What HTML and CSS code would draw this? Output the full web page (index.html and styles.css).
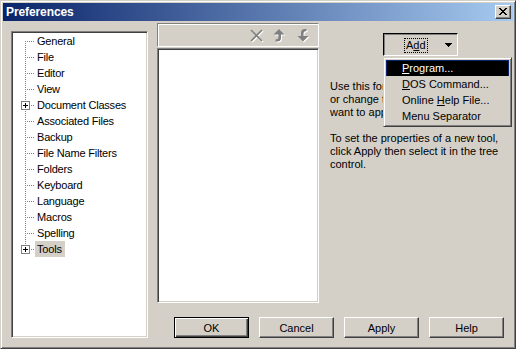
FILE: index.html
```html
<!DOCTYPE html>
<html>
<head>
<meta charset="utf-8">
<link rel="stylesheet" href="styles.css">
</head>
<body>
<div class="window">
  <div class="titlebar">
    <span class="title">Preferences</span>
    <div class="close">
      <svg width="8" height="7" viewBox="0 0 8 7" shape-rendering="crispEdges">
        <rect x="0" y="0" width="2" height="1"/><rect x="6" y="0" width="2" height="1"/>
        <rect x="1" y="1" width="2" height="1"/><rect x="5" y="1" width="2" height="1"/>
        <rect x="2" y="2" width="4" height="1"/>
        <rect x="3" y="3" width="2" height="1"/>
        <rect x="2" y="4" width="4" height="1"/>
        <rect x="1" y="5" width="2" height="1"/><rect x="5" y="5" width="2" height="1"/>
        <rect x="0" y="6" width="2" height="1"/><rect x="6" y="6" width="2" height="1"/>
      </svg>
    </div>
  </div>
  <div class="client">
    <div class="tree">
      <div class="row"><svg class="twig" width="22" height="16" shape-rendering="crispEdges"><line class="dot" x1="12.5" y1="8" x2="12.5" y2="16"/><line class="dot" x1="14" y1="8.5" x2="22" y2="8.5"/></svg><span class="label">General</span></div>
      <div class="row"><svg class="twig" width="22" height="16" shape-rendering="crispEdges"><line class="dot" x1="12.5" y1="0" x2="12.5" y2="16"/><line class="dot" x1="14" y1="8.5" x2="22" y2="8.5"/></svg><span class="label">File</span></div>
      <div class="row"><svg class="twig" width="22" height="16" shape-rendering="crispEdges"><line class="dot" x1="12.5" y1="0" x2="12.5" y2="16"/><line class="dot" x1="14" y1="8.5" x2="22" y2="8.5"/></svg><span class="label">Editor</span></div>
      <div class="row"><svg class="twig" width="22" height="16" shape-rendering="crispEdges"><line class="dot" x1="12.5" y1="0" x2="12.5" y2="16"/><line class="dot" x1="14" y1="8.5" x2="22" y2="8.5"/></svg><span class="label">View</span></div>
      <div class="row"><svg class="twig" width="22" height="16" shape-rendering="crispEdges"><line class="dot" x1="12.5" y1="0" x2="12.5" y2="4"/><line class="dot" x1="12.5" y1="14" x2="12.5" y2="16"/><line class="dot" x1="18" y1="8.5" x2="22" y2="8.5"/><rect class="box" x="8.5" y="4.5" width="8" height="8"/><rect x="10" y="8" width="5" height="1"/><rect x="12" y="6" width="1" height="5"/></svg><span class="label">Document Classes</span></div>
      <div class="row"><svg class="twig" width="22" height="16" shape-rendering="crispEdges"><line class="dot" x1="12.5" y1="0" x2="12.5" y2="16"/><line class="dot" x1="14" y1="8.5" x2="22" y2="8.5"/></svg><span class="label">Associated Files</span></div>
      <div class="row"><svg class="twig" width="22" height="16" shape-rendering="crispEdges"><line class="dot" x1="12.5" y1="0" x2="12.5" y2="16"/><line class="dot" x1="14" y1="8.5" x2="22" y2="8.5"/></svg><span class="label">Backup</span></div>
      <div class="row"><svg class="twig" width="22" height="16" shape-rendering="crispEdges"><line class="dot" x1="12.5" y1="0" x2="12.5" y2="16"/><line class="dot" x1="14" y1="8.5" x2="22" y2="8.5"/></svg><span class="label">File Name Filters</span></div>
      <div class="row"><svg class="twig" width="22" height="16" shape-rendering="crispEdges"><line class="dot" x1="12.5" y1="0" x2="12.5" y2="16"/><line class="dot" x1="14" y1="8.5" x2="22" y2="8.5"/></svg><span class="label">Folders</span></div>
      <div class="row"><svg class="twig" width="22" height="16" shape-rendering="crispEdges"><line class="dot" x1="12.5" y1="0" x2="12.5" y2="16"/><line class="dot" x1="14" y1="8.5" x2="22" y2="8.5"/></svg><span class="label">Keyboard</span></div>
      <div class="row"><svg class="twig" width="22" height="16" shape-rendering="crispEdges"><line class="dot" x1="12.5" y1="0" x2="12.5" y2="16"/><line class="dot" x1="14" y1="8.5" x2="22" y2="8.5"/></svg><span class="label">Language</span></div>
      <div class="row"><svg class="twig" width="22" height="16" shape-rendering="crispEdges"><line class="dot" x1="12.5" y1="0" x2="12.5" y2="16"/><line class="dot" x1="14" y1="8.5" x2="22" y2="8.5"/></svg><span class="label">Macros</span></div>
      <div class="row"><svg class="twig" width="22" height="16" shape-rendering="crispEdges"><line class="dot" x1="12.5" y1="0" x2="12.5" y2="16"/><line class="dot" x1="14" y1="8.5" x2="22" y2="8.5"/></svg><span class="label">Spelling</span></div>
      <div class="row"><svg class="twig" width="22" height="16" shape-rendering="crispEdges"><line class="dot" x1="12.5" y1="0" x2="12.5" y2="4"/><line class="dot" x1="18" y1="8.5" x2="22" y2="8.5"/><rect class="box" x="8.5" y="4.5" width="8" height="8"/><rect x="10" y="8" width="5" height="1"/><rect x="12" y="6" width="1" height="5"/></svg><span class="label selected">Tools</span></div>
    </div>
    <div class="main">
      <div class="top">
        <div class="listcol">
          <div class="toolbar">
            <svg class="tool" width="16" height="16" viewBox="0 0 16 16">
              <g stroke="#fff" stroke-width="1.6" transform="translate(1 1)"><line x1="3" y1="3" x2="14" y2="14"/><line x1="14" y1="3" x2="3" y2="14"/></g>
              <g stroke="#808080" stroke-width="1.6"><line x1="3" y1="3" x2="14" y2="14"/><line x1="14" y1="3" x2="3" y2="14"/></g>
            </svg>
            <svg class="tool" width="16" height="16" viewBox="0 0 16 16">
              <path fill="#fff" transform="translate(1 1)" d="M7 2 L12.5 7.5 L9 7.5 L9 11 Q9 14.5 5 14.5 L3.5 14.5 L3.5 12.5 Q6.5 12.5 6.5 10 L6.5 7.5 L1.5 7.5 Z"/>
              <path fill="#808080" d="M7 2 L12.5 7.5 L9 7.5 L9 11 Q9 14.5 5 14.5 L3.5 14.5 L3.5 12.5 Q6.5 12.5 6.5 10 L6.5 7.5 L1.5 7.5 Z"/>
            </svg>
            <svg class="tool" width="16" height="16" viewBox="0 0 16 16">
              <path fill="#fff" transform="translate(1 1)" d="M7 14.5 L1.5 9 L5 9 L5 6 Q5 2 9 2 L10.5 2 L10.5 4 Q7.5 4 7.5 6.5 L7.5 9 L12.5 9 Z"/>
              <path fill="#808080" d="M7 14.5 L1.5 9 L5 9 L5 6 Q5 2 9 2 L10.5 2 L10.5 4 Q7.5 4 7.5 6.5 L7.5 9 L12.5 9 Z"/>
            </svg>
          </div>
          <div class="listbox"></div>
        </div>
        <div class="side">
          <div class="addwrap">
            <div class="addbtn">
              <span class="focus">A<u>d</u>d</span>
              <svg class="drop" width="7" height="4" viewBox="0 0 7 4" shape-rendering="crispEdges"><rect x="0" y="0" width="7" height="1"/><rect x="1" y="1" width="5" height="1"/><rect x="2" y="2" width="3" height="1"/><rect x="3" y="3" width="1" height="1"/></svg>
            </div>
            <div class="menu">
              <div class="item hot"><u>P</u>rogram...</div>
              <div class="item"><u>D</u>OS Command...</div>
              <div class="item">Online <u>H</u>elp File...</div>
              <div class="item">Menu Separator</div>
            </div>
          </div>
          <p class="help">Use this form to add new tools,<br>or change the settings of tools you<br>want to apply to your files.</p>
          <p class="help">To set the properties of a new tool,<br>click Apply then select it in the tree<br>control.</p>
        </div>
      </div>
      <div class="buttons">
        <div class="btn default">OK</div>
        <div class="btn">Cancel</div>
        <div class="btn">Apply</div>
        <div class="btn">Help</div>
      </div>
    </div>
  </div>
</div>
</body>
</html>
```
FILE: styles.css
```css
body {
  margin: 0;
  background: #d4d0c8;
  font-family: "Liberation Sans", Arial, sans-serif;
  font-size: 11px;
  color: #000;
}

.window {
  width: 516px;
  height: 349px;
  box-sizing: border-box;
  border: 1px solid;
  border-color: #d4d0c8 #404040 #404040 #d4d0c8;
  box-shadow: inset 1px 1px #fff, inset -1px -1px #808080;
  padding: 2px;
  background: #d4d0c8;
  display: flex;
  flex-direction: column;
  overflow: hidden;
}

.titlebar {
  height: 18px;
  flex: none;
  display: flex;
  align-items: center;
  padding: 0 2px 0 3px;
  background: linear-gradient(to right, #0a246a, #a6caf0);
}

.title {
  color: #fff;
  font-weight: bold;
  font-size: 12px;
  letter-spacing: -0.1px;
}

.close {
  margin-left: auto;
  width: 16px;
  height: 14px;
  box-sizing: border-box;
  border: 1px solid;
  border-color: #fff #404040 #404040 #fff;
  box-shadow: inset -1px -1px #808080;
  background: #d4d0c8;
  display: flex;
  align-items: center;
  justify-content: center;
  padding: 0 1px 1px 0;
}

.client {
  flex: 1;
  display: flex;
  padding: 2px 0 0 8px;
}

.tree {
  width: 137px;
  height: 307px;
  margin-top: 8px;
  box-sizing: border-box;
  border: 1px solid;
  border-color: #808080 #fff #fff #808080;
  box-shadow: inset 1px 1px #404040, inset -1px -1px #d4d0c8;
  background: #fff;
  padding: 1px;
  letter-spacing: -0.2px;
}

.row {
  height: 16px;
  display: flex;
  align-items: center;
}

.twig {
  flex: none;
  display: block;
}

.dot {
  stroke: #808080;
  stroke-width: 1;
  stroke-dasharray: 1 1;
}

.box {
  fill: #fff;
  stroke: #808080;
  stroke-width: 1;
}

.label {
  padding: 0 3px 0 2px;
  line-height: 16px;
  white-space: nowrap;
}

.selected {
  background: #d4d0c8;
}

.main {
  flex: 1;
  margin-left: 9px;
  display: flex;
  flex-direction: column;
}

.top {
  display: flex;
}

.listcol {
  width: 162px;
  flex: none;
  display: flex;
  flex-direction: column;
  gap: 1px;
}

.toolbar {
  height: 24px;
  box-sizing: border-box;
  border: 1px solid;
  border-color: #808080 #fff #fff #808080;
  box-shadow: inset 1px 1px #fff;
  display: flex;
  justify-content: flex-end;
  align-items: center;
  gap: 8px;
  padding-right: 6px;
}

.tool {
  display: block;
}

.listbox {
  height: 255px;
  box-sizing: border-box;
  border: 1px solid;
  border-color: #808080 #fff #fff #808080;
  box-shadow: inset 1px 1px #404040, inset -1px -1px #d4d0c8;
  background: #fff;
}

.side {
  margin-left: 11px;
  flex: 1;
}

.addwrap {
  position: relative;
  margin: 10px 0 0 53px;
  width: 75px;
}

.addbtn {
  width: 75px;
  height: 23px;
  box-sizing: border-box;
  border: 1px solid;
  border-color: #000 #fff #fff #000;
  box-shadow: inset 1px 1px #808080;
  display: flex;
  align-items: center;
  padding-top: 1px;
}

.focus {
  margin-left: 20px;
  padding: 0 1px;
  line-height: 13px;
  border: 1px dotted #000;
}

.drop {
  display: block;
  margin-left: auto;
  margin-right: 5px;
}

.menu {
  position: absolute;
  left: 0;
  top: 24px;
  width: 129px;
  box-sizing: border-box;
  border: 1px solid;
  border-color: #d4d0c8 #404040 #404040 #d4d0c8;
  box-shadow: inset 1px 1px #fff, inset -1px -1px #808080;
  background: #d4d0c8;
  padding: 2px;
  z-index: 2;
}

.item {
  height: 16px;
  line-height: 16px;
  padding-left: 16px;
  white-space: nowrap;
}

.hot {
  background: #000;
  color: #fff;
  box-shadow: inset 0 1px #0a246a, inset 1px 0 #0a246a, inset -1px 0 #0a246a;
}

.help {
  margin: 0;
  line-height: 13px;
  white-space: nowrap;
}

.addwrap + .help {
  margin-top: 24px;
}

.help + .help {
  margin-top: 13px;
}

.buttons {
  display: flex;
  justify-content: flex-end;
  gap: 10px;
  margin-top: 14px;
  padding-right: 9px;
}

.btn {
  width: 75px;
  height: 21px;
  box-sizing: border-box;
  border: 1px solid;
  border-color: #fff #404040 #404040 #fff;
  box-shadow: inset -1px -1px #808080;
  display: flex;
  align-items: center;
  justify-content: center;
}

.btn.default {
  border-color: #000;
  box-shadow: inset 1px 1px #fff, inset -1px -1px #404040, inset -2px -2px #808080;
}
```
